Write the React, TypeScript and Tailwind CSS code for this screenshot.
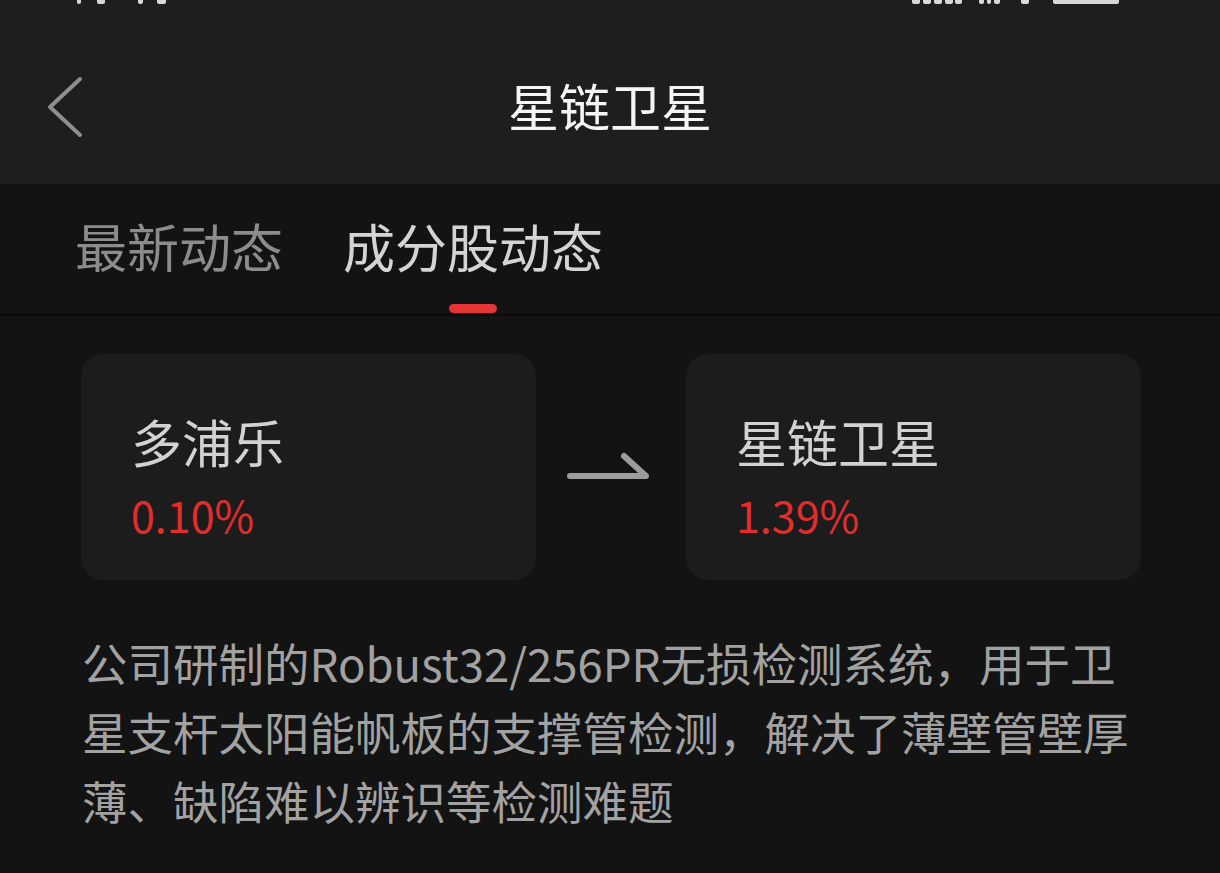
import React from 'react'

const FONT = { fontFamily: '"Noto Sans CJK SC", "Noto Sans", sans-serif' }

// bottoms of the status-bar glyphs, cut off by the top edge of the screen
const STATUS_BITS = [
  { left: 77, width: 4 },
  { left: 97, width: 8 },
  { left: 138, width: 5 },
  { left: 157, width: 9 },
  { left: 912, width: 8 },
  { left: 923, width: 8 },
  { left: 934, width: 8 },
  { left: 945, width: 8 },
  { left: 955, width: 7 },
  { left: 979, width: 5 },
  { left: 987, width: 4 },
  { left: 994, width: 6 },
  { left: 1021, width: 8 },
  { left: 1053, width: 66 },
]

function Card({ name, pct }: { name: string; pct: string }) {
  return (
    <div className="w-[455px] h-[226px] rounded-[22px] bg-[#1c1c1c] pl-[50px] pt-[57px]">
      <div className="text-[51px] leading-[60px] text-[#d2d2d2]">{name}</div>
      <div className="mt-[17px] text-[43px] leading-[52px] text-[#e22d2d]">{pct}</div>
    </div>
  )
}

export default function App() {
  return (
    <div className="w-[1220px] h-[873px] bg-[#131313] overflow-hidden" style={FONT}>
      {/* Header */}
      <div className="bg-[#1e1e1e] h-[184px] flex flex-col">
        <div className="relative h-[30px]">
          {STATUS_BITS.map((b, i) => (
            <div
              key={i}
              className="absolute top-0 h-[4px] rounded-b-[2px] bg-[#d8d8d8]"
              style={{ left: b.left, width: b.width }}
            />
          ))}
        </div>
        <div className="relative flex-1 flex items-center justify-center">
          <svg
            className="absolute left-[44px] top-[46px]"
            width="42"
            height="62"
            viewBox="0 0 42 62"
            fill="none"
          >
            <path
              d="M36 3 L6 31 L36 59"
              stroke="#8e8e8e"
              strokeWidth="4"
              strokeLinecap="round"
              strokeLinejoin="round"
            />
          </svg>
          <span className="-mt-[4px] text-[51px] leading-none text-[#f5f5f5]">星链卫星</span>
        </div>
      </div>

      {/* Tabs */}
      <div className="flex gap-[60px] pl-[75px] pt-[32px] pb-[1px]">
        <div className="flex flex-col items-center">
          <span className="text-[52px] leading-[60px] text-[#8c8c8c]">最新动态</span>
          <div className="mt-[28px] h-[9px]" />
        </div>
        <div className="flex flex-col items-center">
          <span className="text-[52px] leading-[60px] text-[#d4d4d4]">成分股动态</span>
          <div className="mt-[28px] h-[9px] w-[48px] rounded-full bg-[#e53535]" />
        </div>
      </div>
      <div className="h-[2px] bg-[#0a0a0a]" />

      {/* Cards */}
      <div className="mt-[38px] pl-[81px] flex items-center">
        <Card name="多浦乐" pct="0.10%" />
        <div className="w-[150px] flex justify-center">
          <svg width="86" height="32" viewBox="0 0 86 32" fill="none" className="-ml-[4px]">
            <path
              d="M4 25 H80 L58 5"
              stroke="#9c9c9c"
              strokeWidth="6"
              strokeLinecap="round"
              strokeLinejoin="round"
            />
          </svg>
        </div>
        <Card name="星链卫星" pct="1.39%" />
      </div>

      {/* Description */}
      <p className="mt-[48px] pl-[82px] pr-[60px] text-[45.5px] leading-[69px] text-[#a2a2a2]">
        公司研制的Robust32/256PR无损检测系统，用于卫
        <br />
        星支杆太阳能帆板的支撑管检测，解决了薄壁管壁厚
        <br />
        薄、缺陷难以辨识等检测难题
      </p>
    </div>
  )
}
